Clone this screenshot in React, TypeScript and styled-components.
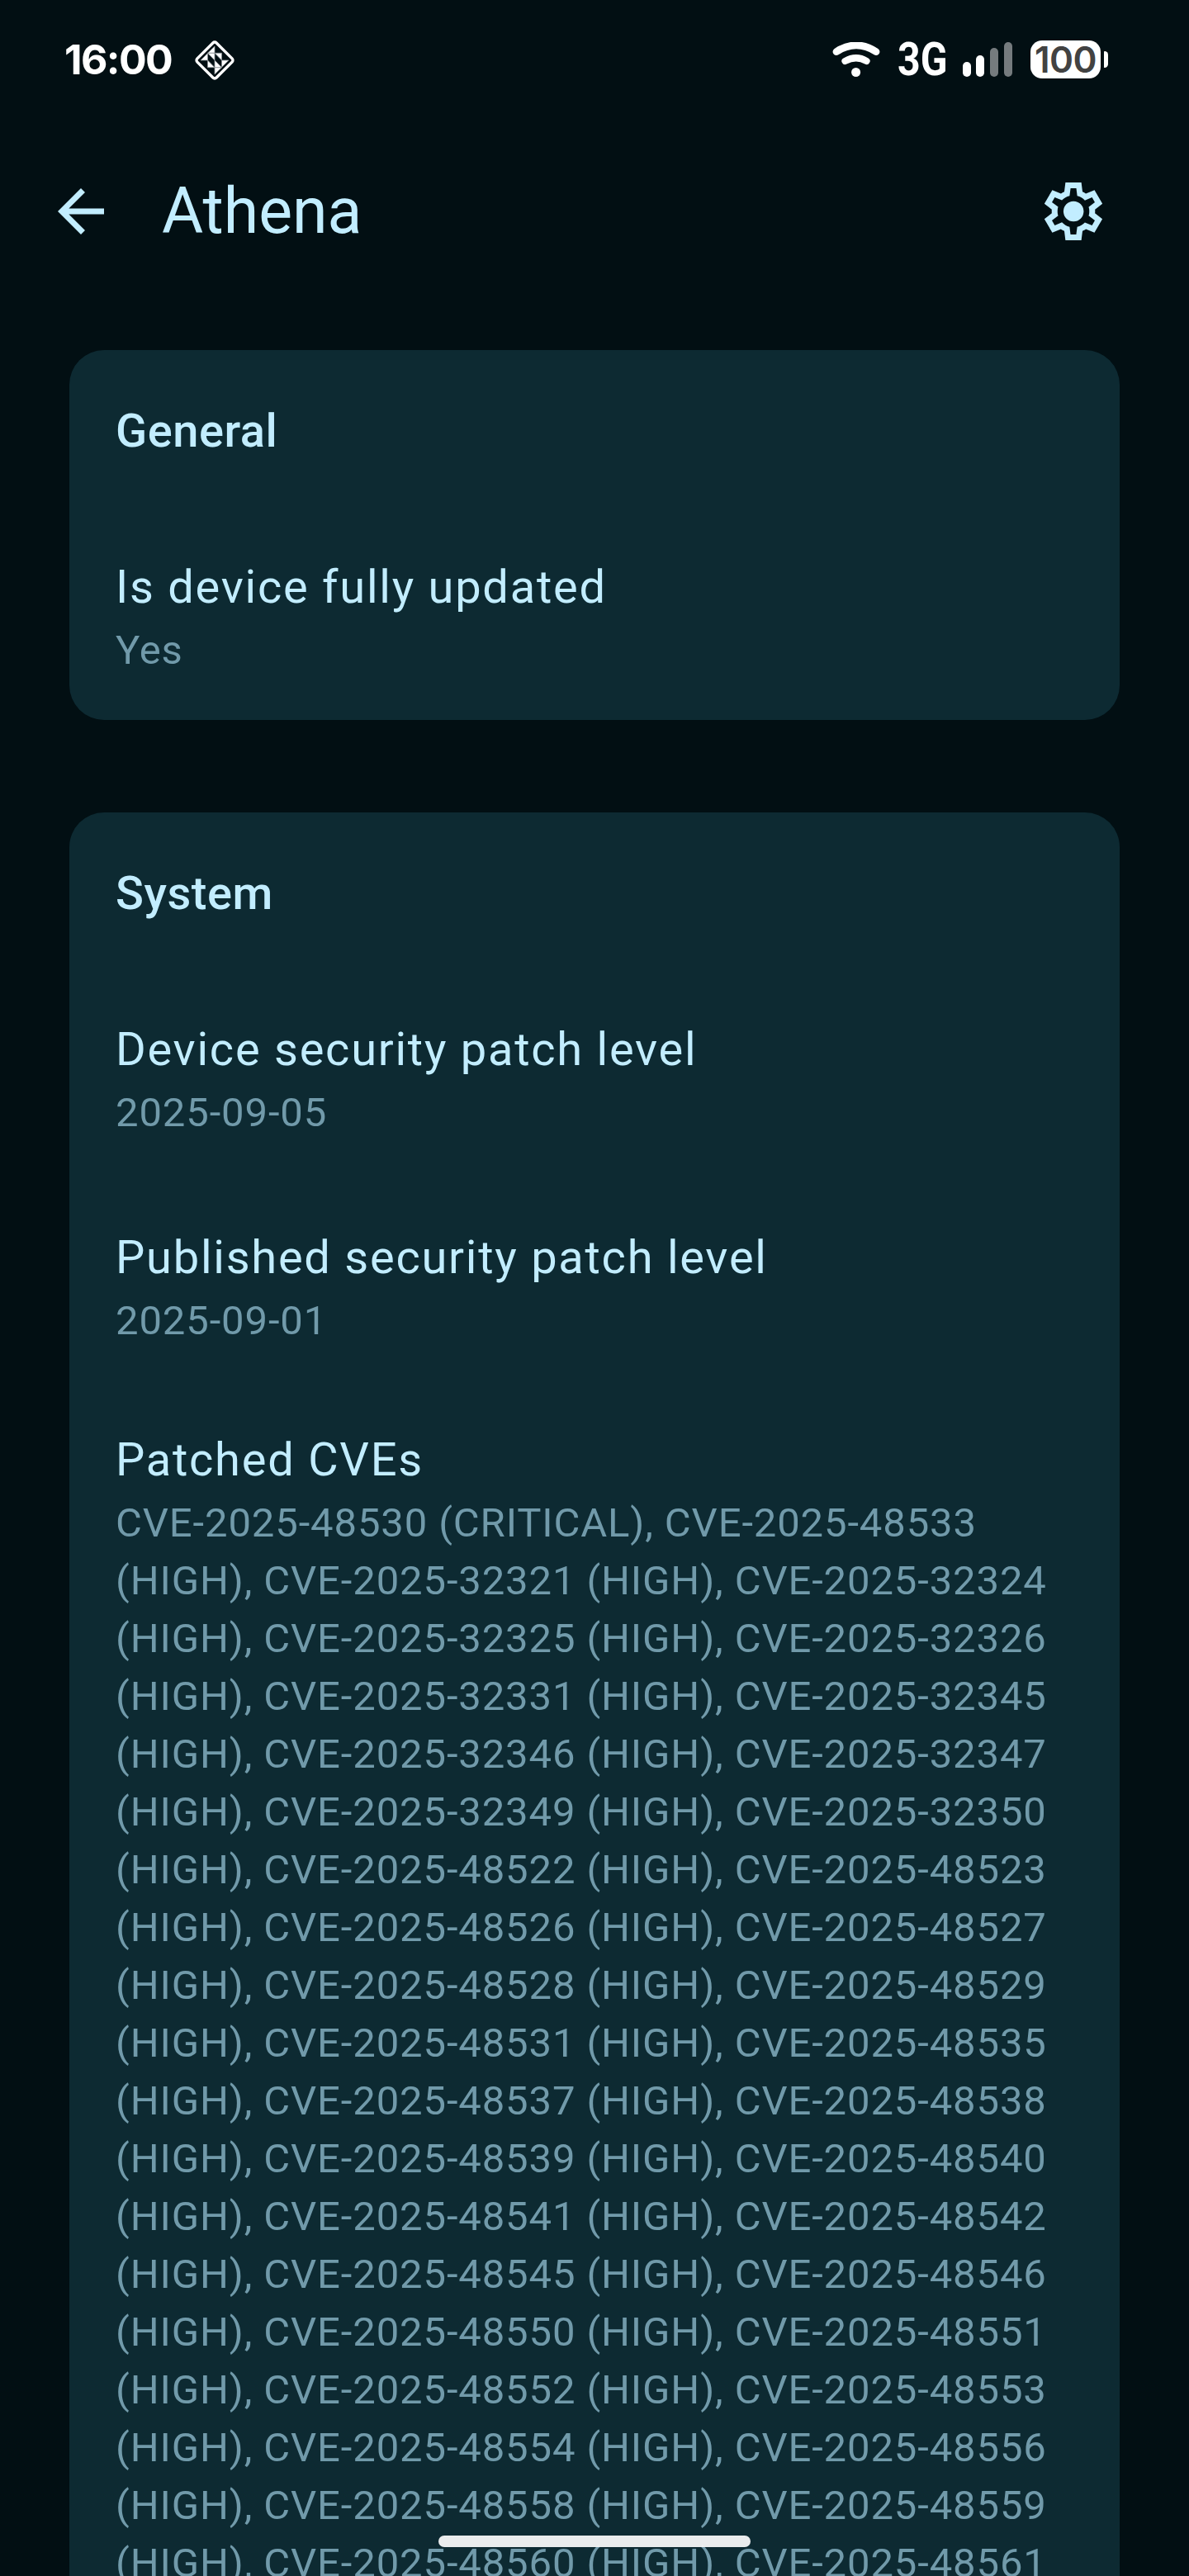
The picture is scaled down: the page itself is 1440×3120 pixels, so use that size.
import React from "react";
import styled, { createGlobalStyle } from "styled-components";

const colors = {
  background: "#020f13",
  card: "#0d2a32",
  primary: "#c2edff",
  secondary: "#719aaa",
  status: "#ffffff",
  statusDim: "#757b7e",
};

const GlobalStyle = createGlobalStyle`
  html, body { margin: 0; padding: 0; background: ${colors.background}; }
  *, *::before, *::after { box-sizing: border-box; }
`;

const Screen = styled.div`
  position: relative;
  display: flex;
  flex-direction: column;
  width: 1440px;
  height: 3120px;
  overflow: hidden;
  background: ${colors.background};
  color: ${colors.primary};
  font-family: Roboto, "Noto Sans", sans-serif;
`;

const StatusBar = styled.header`
  display: flex;
  flex: none;
  align-items: center;
  justify-content: space-between;
  height: 144px;
  padding: 0 98px 0 78px;
  color: ${colors.status};
`;

const StatusGroup = styled.div`
  display: flex;
  align-items: center;
`;

const Clock = styled.span`
  width: 157px;
  font: 700 50px/60px Inter, sans-serif;
  letter-spacing: -1.6px;
`;

const NetworkType = styled.span`
  width: 81px;
  padding-left: 21px;
  font: 700 56px/60px Roboto, sans-serif;
  white-space: nowrap;
`;

const NetworkLabel = styled.span`
  display: inline-block;
  transform: scaleX(0.86);
  transform-origin: left center;
`;

const SignalBars = styled.div`
  display: flex;
  align-items: flex-end;
  gap: 6.8px;
  height: 42px;
  margin-left: 19px;
`;

const SignalBar = styled.span<{ $height: number; $active: boolean }>`
  width: 10px;
  height: ${(p) => p.$height}px;
  border-radius: 5px;
  background: ${(p) => (p.$active ? colors.status : colors.statusDim)};
`;

const Battery = styled.div`
  display: flex;
  align-items: center;
  gap: 4px;
  margin-left: 22px;
`;

const BatteryBody = styled.div`
  display: flex;
  align-items: center;
  justify-content: center;
  width: 85px;
  height: 46px;
  border-radius: 14px;
  background: ${colors.status};
  color: #424242;
  font: 600 44px/46px Inter, sans-serif;
  letter-spacing: -0.5px;
`;

const BatteryTip = styled.span`
  width: 5px;
  height: 20px;
  border-radius: 1px 5px 5px 1px;
  background: ${colors.status};
`;

const AppBar = styled.nav`
  display: flex;
  flex: none;
  align-items: center;
  height: 224px;
  padding: 0 98px 0 56px;
`;

const IconButton = styled.button`
  display: flex;
  flex: none;
  width: 84px;
  height: 84px;
  padding: 0;
  border: 0;
  background: none;
  color: inherit;
`;

const Title = styled.h1`
  flex: 1;
  margin: 0 0 0 56px;
  font-size: 77px;
  font-weight: 400;
  line-height: 98px;
`;

const Content = styled.main`
  display: flex;
  flex-direction: column;
  gap: 112px;
  padding: 56px 84px 0;
`;

const Card = styled.section`
  display: flex;
  flex-direction: column;
  border-radius: 42px;
  background: ${colors.card};
`;

const CardTitle = styled.h2`
  margin: 0;
  padding: 56px;
  font-size: 56px;
  font-weight: 500;
  line-height: 84px;
  letter-spacing: 0.525px;
`;

const ListItem = styled.div<{ $tall?: boolean }>`
  padding: ${(p) => (p.$tall ? 42 : 49)}px 56px;
`;

const Headline = styled.div`
  font-size: 56px;
  line-height: 84px;
  letter-spacing: 1.75px;
`;

const Supporting = styled.div`
  color: ${colors.secondary};
  font-size: 49px;
  line-height: 70px;
  letter-spacing: 0.875px;
  white-space: pre-line;
`;

const HomeIndicator = styled.div`
  position: absolute;
  bottom: 35px;
  left: 531px;
  width: 378px;
  height: 14px;
  border-radius: 7px;
  background: rgba(247, 247, 248, 0.95);
`;

const LogoIcon = () => (
  <svg width="50" height="50" viewBox="-25 -26 50 50">
    <rect x="-16.4" y="-16.4" width="32.8" height="32.8" rx="3" transform="rotate(45)" fill="none" stroke="#fff" strokeWidth="3.4" />
    <g fill="#fff" stroke="#8b9295" strokeWidth="0.8">
      <path d="M0-17V-8.7H-8.5zM-8.5-8.5V0H-17zM0 17V8.7H8.5zM8.5 8.5V0H17z" />
      <path d="M-8.5-8.7H0L0 0zM8.5-8.7V0L0-8.7zM8.5 8.7H0V0zM-8.5 8.7V0L0 8.7z" />
    </g>
  </svg>
);

const WifiIcon = () => (
  <svg width="58" height="42" viewBox="0 0 58 42" fill="none" stroke="#fff" strokeLinecap="round">
    <path d="M5 11.6Q29-3.8 53 11.6" strokeWidth="8.8" />
    <path d="M15.5 23Q29 15.5 41.5 23" strokeWidth="8.2" />
    <circle cx="28.6" cy="36.5" r="5.5" fill="#fff" stroke="none" />
  </svg>
);

const BackIcon = () => (
  <svg width="84" height="84" viewBox="0 0 24 24" fill="currentColor">
    <path d="M7.825 13l5.6 5.6L12 20l-8-8 8-8 1.425 1.4-5.6 5.6H20v2z" />
  </svg>
);

const SettingsIcon = () => (
  <svg width="84" height="84" viewBox="0 0 24 24" fill="currentColor">
    <path d="M9.25 22l-.4-3.2q-.325-.125-.612-.3t-.563-.375L4.7 19.375l-2.75-4.75 2.575-1.95Q4.5 12.5 4.5 12.337v-.675q0-.162.025-.337L1.95 9.375l2.75-4.75 2.975 1.25q.275-.2.575-.375t.6-.3l.4-3.2h5.5l.4 3.2q.325.125.613.3t.562.375l2.975-1.25 2.75 4.75-2.575 1.95q.025.175.025.338v.674q0 .163-.05.338l2.575 1.95-2.75 4.75-2.95-1.25q-.275.2-.575.375t-.6.3l-.4 3.2zm1.75-2h1.975l.35-2.65q.775-.2 1.438-.587t1.212-.938l2.475 1.025.975-1.7-2.15-1.625q.125-.35.175-.737t.05-.788-.05-.787-.175-.738l2.15-1.625-.975-1.7-2.475 1.05q-.55-.575-1.212-.962t-1.438-.588L13 4h-1.975l-.35 2.65q-.775.2-1.437.588t-1.213.937L5.55 7.15l-.975 1.7 2.15 1.6q-.125.375-.175.75t-.05.8q0 .4.05.775t.175.75l-2.15 1.625.975 1.7 2.475-1.05q.55.575 1.213.963t1.437.587zm1.05-4.5q1.45 0 2.475-1.025T15.55 12t-1.025-2.475T12.05 8.5q-1.475 0-2.487 1.025T8.55 12t1.013 2.475T12.05 15.5" />
  </svg>
);

const highCves = [
  "48533", "32321", "32324", "32325", "32326", "32331", "32345", "32346", "32347",
  "32349", "32350", "48522", "48523", "48526", "48527", "48528", "48529", "48531",
  "48535", "48537", "48538", "48539", "48540", "48541", "48542", "48545", "48546",
  "48550", "48551", "48552", "48553", "48554", "48556", "48558", "48559", "48560",
  "48561",
];

// Every second identifier closes a line, so its severity opens the next one.
const patchedCves =
  "CVE-2025-48530 (CRITICAL), " +
  highCves
    .map((id, i) => {
      const last = i === highCves.length - 1;
      return last ? `CVE-2025-${id}` : `CVE-2025-${id}${i % 2 === 0 ? "\n" : " "}(HIGH)`;
    })
    .join(", ");

const signal = [
  { height: 18, active: true },
  { height: 26.5, active: true },
  { height: 35, active: false },
  { height: 42, active: false },
];

export default function App() {
  return (
    <Screen>
      <GlobalStyle />
      <StatusBar>
        <StatusGroup>
          <Clock>16:00</Clock>
          <LogoIcon />
        </StatusGroup>
        <StatusGroup>
          <WifiIcon />
          <NetworkType>
            <NetworkLabel>3G</NetworkLabel>
          </NetworkType>
          <SignalBars>
            {signal.map((bar) => (
              <SignalBar key={bar.height} $height={bar.height} $active={bar.active} />
            ))}
          </SignalBars>
          <Battery>
            <BatteryBody>100</BatteryBody>
            <BatteryTip />
          </Battery>
        </StatusGroup>
      </StatusBar>
      <AppBar>
        <IconButton aria-label="Back">
          <BackIcon />
        </IconButton>
        <Title>Athena</Title>
        <IconButton aria-label="Settings">
          <SettingsIcon />
        </IconButton>
      </AppBar>
      <Content>
        <Card>
          <CardTitle>General</CardTitle>
          <ListItem>
            <Headline>Is device fully updated</Headline>
            <Supporting>Yes</Supporting>
          </ListItem>
        </Card>
        <Card>
          <CardTitle>System</CardTitle>
          <ListItem>
            <Headline>Device security patch level</Headline>
            <Supporting>2025-09-05</Supporting>
          </ListItem>
          <ListItem>
            <Headline>Published security patch level</Headline>
            <Supporting>2025-09-01</Supporting>
          </ListItem>
          <ListItem $tall>
            <Headline>Patched CVEs</Headline>
            <Supporting>{patchedCves}</Supporting>
          </ListItem>
        </Card>
      </Content>
      <HomeIndicator />
    </Screen>
  );
}
